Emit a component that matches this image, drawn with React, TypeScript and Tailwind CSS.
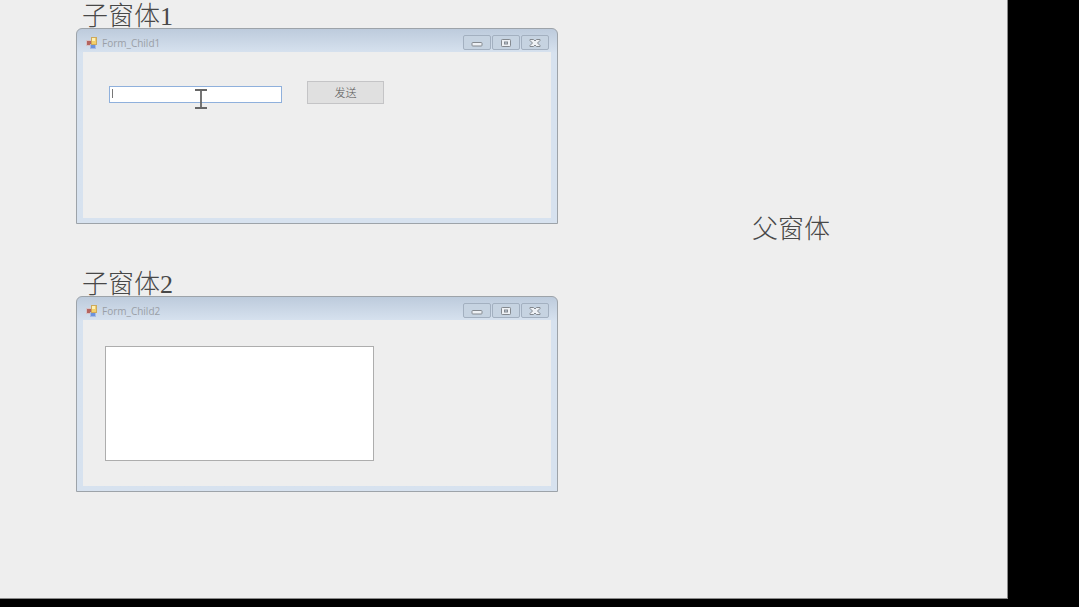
import type { ReactNode } from "react";

const cjk = "font-['Liberation_Serif','Noto_Sans_CJK_SC',serif] font-light text-[#484848] text-[26px] leading-7";

function FormIcon() {
  return (
    <svg width="12" height="12" viewBox="0 0 12 12" className="shrink-0">
      <rect x="0.5" y="3.5" width="5" height="5" fill="#b5655f" stroke="#d6c3c8" />
      <rect x="4.5" y="7.5" width="5" height="4" fill="#6c92dc" stroke="#a6bbe4" />
      <rect x="5.5" y="0.5" width="5" height="7" fill="#f3cf6a" stroke="#cda95c" />
      <rect x="6" y="1" width="3" height="3" fill="#fdf0b5" />
    </svg>
  );
}

function MinimizeIcon() {
  return (
    <svg width="12" height="10" viewBox="0 0 12 10">
      <rect x="1" y="4.5" width="10" height="3.5" rx="0.8" fill="#eef1f5" stroke="#84898f" />
    </svg>
  );
}

function MaximizeIcon() {
  return (
    <svg width="12" height="10" viewBox="0 0 12 10">
      <rect x="1.5" y="1.5" width="9" height="7" rx="0.8" fill="#eef1f5" stroke="#84898f" />
      <rect x="4.5" y="4" width="3" height="2" fill="#c3d0df" stroke="#84898f" />
    </svg>
  );
}

function CloseIcon() {
  return (
    <svg width="12" height="10" viewBox="0 0 12 10">
      <path d="M1 1.5 H4.5 L6 3 L7.5 1.5 H11 V2.5 L8.5 5 L11 7.5 V8.5 H7.5 L6 7 L4.5 8.5 H1 V7.5 L3.5 5 L1 2.5 Z" fill="#eef1f5" stroke="#84898f" />
    </svg>
  );
}

function CaptionButton({ label, children }: { label: string; children: ReactNode }) {
  return (
    <button
      type="button"
      aria-label={label}
      className="flex h-[15px] w-7 items-center justify-center rounded-xs border border-[#a3b0c0] bg-[#c6d3e1]"
    >
      {children}
    </button>
  );
}

function ChildForm({ title, children }: { title: string; children: ReactNode }) {
  return (
    <section className="flex h-[196px] flex-col rounded-t-md border border-[#9da3a9] bg-[#d7e2ef] bg-linear-to-b from-[#bdcbdc] to-[#d7e2ef] to-[24px] px-1.5 pb-[5px]">
      <header className="flex h-[23px] shrink-0 items-center pt-1">
        <div className="flex flex-1 items-center gap-1 pl-[3px]">
          <FormIcon />
          <h2 className="font-['Open_Sans',sans-serif] text-[10px] leading-4 text-[#9a9fa6]">{title}</h2>
        </div>
        <div className="flex gap-px pr-0.5">
          <CaptionButton label="Minimize"><MinimizeIcon /></CaptionButton>
          <CaptionButton label="Maximize"><MaximizeIcon /></CaptionButton>
          <CaptionButton label="Close"><CloseIcon /></CaptionButton>
        </div>
      </header>
      <div className="flex-1 bg-[#eeeeee]">{children}</div>
    </section>
  );
}

export default function App() {
  return (
    <div className="flex min-h-screen bg-black pr-[71px] pb-2">
      <main className="flex flex-1 border-r border-b border-[#8a8a8a] bg-[#eeeeee] pl-[76px]">
        <div className="flex w-[482px] shrink-0 flex-col gap-11">
          <div>
            <h1 className={`${cjk} h-7 pt-[3px] pl-1.5`}>子窗体1</h1>
            <ChildForm title="Form_Child1">
              <form className="flex items-start gap-[25px] pt-[29px] pl-[26px]">
                <div className="relative mt-[5px] w-[173px]">
                  <input
                    type="text"
                    aria-label="Message"
                    className="block h-[17px] w-full border border-[#8fb0dc] bg-white px-1 text-xs outline-none"
                  />
                  <span className="absolute top-[3px] left-[3px] h-[9px] w-px bg-[#777777]" />
                  {/* mouse pointer */}
                  <svg width="14" height="20" viewBox="0 0 14 20" className="absolute top-[3px] left-[85px]">
                    <path d="M1 1 H13 M1 19 H13 M7 1 V19" stroke="#666666" strokeWidth="1.8" fill="none" />
                  </svg>
                </div>
                <button
                  type="button"
                  className="h-[23px] w-[77px] border border-[#c4c4c6] bg-[#e0e0e0] pb-0.5 font-['Noto_Sans_CJK_SC',sans-serif] text-[11px] leading-4 font-light text-[#555555]"
                >
                  发送
                </button>
              </form>
            </ChildForm>
          </div>
          <div>
            <h1 className={`${cjk} h-7 pt-[3px] pl-1.5`}>子窗体2</h1>
            <ChildForm title="Form_Child2">
              <textarea
                aria-label="Received messages"
                className="mt-[26px] ml-[22px] block h-[115px] w-[269px] resize-none border border-[#adadad] bg-white p-1 text-xs outline-none"
              />
            </ChildForm>
          </div>
        </div>
        <p className={`${cjk} mt-[216px] ml-[194px]`}>父窗体</p>
      </main>
    </div>
  );
}
